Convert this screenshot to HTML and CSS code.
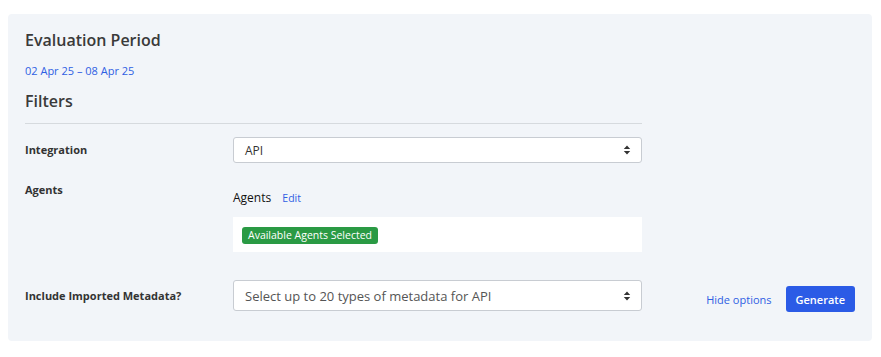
FILE: index.html
```html
<!DOCTYPE html>
<html lang="en">
<head>
    <meta charset="UTF-8">
    <meta name="viewport" content="width=device-width, initial-scale=1.0">
    <title>Report options</title>
    <link rel="stylesheet" href="styles.css">
</head>
<body>

<div class="panel">
    <h2 class="section-title">Evaluation Period</h2>
    <a class="period" href="#">02 Apr 25 – 08 Apr 25</a>
    <h2 class="section-title filters-title">Filters</h2>
    <div class="divider"></div>

    <div class="row row-integration">
        <div class="row-label">Integration</div>
        <div class="select">
            <span>API</span>
            <svg class="caret" width="8" height="10" viewBox="0 0 8 10"><path d="M4 0.5 L7.2 4 L0.8 4 Z M4 9.5 L7.2 6 L0.8 6 Z" fill="#333"/></svg>
        </div>
    </div>

    <div class="row row-agents">
        <div class="row-label">Agents</div>
        <div class="agents">
            <div class="agents-head">Agents <a href="#" class="link">Edit</a></div>
            <div class="agents-box">
                <span class="badge">Available Agents Selected</span>
            </div>
        </div>
    </div>

    <div class="row row-meta">
        <div class="row-label">Include Imported Metadata?</div>
        <div class="select select-tall">
            <span>Select up to 20 types of metadata for API</span>
            <svg class="caret" width="8" height="10" viewBox="0 0 8 10"><path d="M4 0.5 L7.2 4 L0.8 4 Z M4 9.5 L7.2 6 L0.8 6 Z" fill="#333"/></svg>
        </div>
        <div class="actions">
            <a href="#" class="link hide-link">Hide options</a>
            <button class="btn">Generate</button>
        </div>
    </div>
</div>

</body>
</html>
```

FILE: styles.css
```css
body {
    font-family: "Open Sans", Arial, sans-serif;
    margin: 0;
    padding: 14px 9px 0 8px;
    background-color: #fff;
    color: #333;
}
.panel {
    background-color: #f2f5f9;
    border-radius: 4px;
    padding: 15px 17px 29px;
}
.section-title {
    margin: 0;
    font-size: 16px;
    line-height: 22px;
    font-weight: 600;
    color: #3a3a3a;
}
.period {
    display: block;
    margin-top: 12px;
    font-size: 11px;
    line-height: 16px;
    color: #2f5fe3;
    text-decoration: none;
}
.filters-title {
    margin-top: 11px;
}
.divider {
    width: 617px;
    height: 1px;
    background-color: #d6dade;
    margin-top: 11px;
}
.row {
    display: flex;
}
.row-label {
    width: 208px;
    flex-shrink: 0;
    font-size: 11px;
    line-height: 16px;
    font-weight: 700;
    color: #333;
}
.row-integration {
    margin-top: 13px;
    align-items: center;
}
.select {
    width: 409px;
    height: 26px;
    box-sizing: border-box;
    background-color: #fff;
    border: 1px solid #c8ccd2;
    border-radius: 3px;
    display: flex;
    align-items: center;
    justify-content: space-between;
    padding: 0 10px 0 11px;
    font-size: 12px;
    color: #333;
}
.select-tall {
    height: 31px;
    font-size: 13px;
    color: #555;
}
.row-agents {
    margin-top: 19px;
}
.agents {
    width: 409px;
}
.agents-head {
    margin-top: 8px;
    font-size: 12px;
    line-height: 16px;
    color: #111;
}
.link {
    color: #2f5fe3;
    text-decoration: none;
}
.agents-head .link {
    font-size: 10.5px;
    margin-left: 8px;
}
.agents-box {
    margin-top: 11px;
    background-color: #fff;
    height: 35px;
    box-sizing: border-box;
    padding: 10px 9px 0;
    display: flex;
    align-items: flex-start;
}
.badge {
    display: block;
    background-color: #2a9a44;
    color: #fff;
    font-size: 10.5px;
    font-weight: 500;
    line-height: 17px;
    padding: 0 6px;
    border-radius: 3px;
}
.row-meta {
    margin-top: 27px;
    align-items: center;
}
.actions {
    margin-left: auto;
    margin-top: 7px;
    display: flex;
    align-items: center;
    gap: 14px;
}
.hide-link {
    font-size: 11px;
}
.btn {
    font-family: inherit;
    font-size: 11px;
    font-weight: 600;
    color: #fff;
    background-color: #2b5be6;
    border: none;
    border-radius: 3px;
    height: 26px;
    padding: 0 10px;
    cursor: pointer;
}
```
